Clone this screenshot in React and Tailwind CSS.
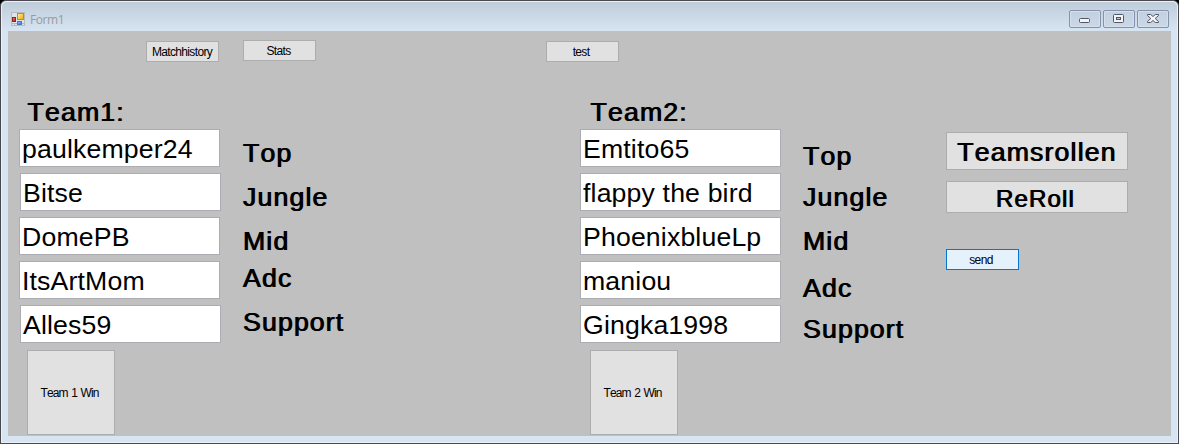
const base = "shrink-0 flex items-center justify-center border border-[#adadad] bg-[#e1e1e1] whitespace-nowrap";
const strong = "text-[26.67px] leading-[30px] tracking-[1.15px] [text-shadow:1px_0_#000] whitespace-nowrap";

function SmallButton({ children, className = "" }) {
  return <button className={`${base} h-[21px] w-[73px] pt-px text-[12px] tracking-[-0.65px] ${className}`}>{children}</button>;
}

function Field({ children, className = "" }) {
  return (
    <div className={`h-[38px] w-[201px] shrink-0 border border-[#abadb3] bg-white pl-[2px] text-[26.67px] leading-[39px] tracking-[0.15px] whitespace-nowrap ${className}`}>
      {children}
    </div>
  );
}

function Role({ children, className = "" }) {
  return <div className={`${strong} h-[30px] ${className}`}>{children}</div>;
}

function Caption({ children, className = "pr-px" }) {
  return <button className={`flex h-[18px] w-8 items-center justify-center rounded-[2px] border border-[#8591ad] bg-gradient-to-b from-[#c3d0df] to-[#cbd8e7] shadow-[inset_0_0_0_1px_#d5e0ec] ${className}`}>{children}</button>;
}

function FormIcon() {
  return (
    <svg width="14" height="14" viewBox="0 0 14 14" shapeRendering="crispEdges">
      <defs>
        <linearGradient id="gold" x1="0" y1="0" x2="1" y2="1"><stop stopColor="#fff3a0" /><stop offset="1" stopColor="#efa900" /></linearGradient>
        <linearGradient id="red" x1="0" y1="0" x2="1" y2="1"><stop stopColor="#ef9080" /><stop offset="1" stopColor="#b50d08" /></linearGradient>
        <linearGradient id="blue" x1="0" y1="0" x2="1" y2="1"><stop stopColor="#a9ccff" /><stop offset="1" stopColor="#2468d8" /></linearGradient>
      </defs>
      <path d="M.5.5h13v13H.5zM1 11.5h12M3.5 11v2" fill="#dce3ea" stroke="#b8babd" />
      <path d="M6.5 1.5h6v6h-6z" fill="url(#gold)" stroke="#c48b16" />
      <path d="M1.5 5.5h3v4h-3z" fill="url(#red)" stroke="#8e2520" />
      <path d="M6.5 9.5h4v3h-4z" fill="url(#blue)" stroke="#4d78b8" />
    </svg>
  );
}

export default function App() {
  return (
    <div className="h-[444px] w-[1179px] overflow-hidden bg-black text-black [font-family:'Liberation_Sans',Arial,sans-serif] [font-kerning:none]">
      <div className="flex h-full flex-col rounded-t-[6px] border border-[#4c494e] bg-[#d7e4f2] shadow-[inset_0_0_0_1px_#eaf1f8]">
        <header className="mx-px mt-px flex h-[29px] shrink-0 items-start rounded-t-[5px] bg-gradient-to-b from-[#bfcddb] to-[#d7e4f2] pl-[9px] pr-[8px]">
          <div className="mt-[10px]"><FormIcon /></div>
          <span className="ml-[5px] mt-[10px] text-[12px] leading-[16px] tracking-[-0.4px] text-[#999b9f] [font-family:'Open_Sans',sans-serif]">Form1</span>
          <div className="ml-auto mt-[8px] flex gap-[2px]">
            <Caption>
              <svg className="mt-[3px]" width="11" height="5" viewBox="0 0 11 5"><rect x=".5" y=".5" width="10" height="4" rx="1" fill="#f4f4f4" stroke="#535666" /></svg>
            </Caption>
            <Caption>
              <svg className="-mt-px" width="11" height="9" viewBox="0 0 11 9"><rect x=".5" y=".5" width="10" height="8" rx="1" fill="#f4f4f4" stroke="#535666" /><rect x="3.5" y="3.5" width="4" height="2" fill="#bccbdc" stroke="#535666" /></svg>
            </Caption>
            <Caption className="">
              <svg className="-mt-px" width="12" height="9" viewBox="0 0 12 9"><path d="M.5.5h3.2L6 2.5 8.3.5h3.2v1L8.2 4.5l3.3 3v1H8.3L6 6.5l-2.3 2H.5v-1l3.3-3L.5 1.5z" fill="#f4f4f4" stroke="#535666" /></svg>
            </Caption>
          </div>
        </header>

        <main className="mx-[7px] flex h-[405px] shrink-0 flex-col bg-[#c0c0c0]">
          <nav className="flex h-[66px] shrink-0 items-start pl-[138px]">
            <SmallButton className="mt-[10px] pr-px">Matchhistory</SmallButton>
            <SmallButton className="mt-[9px] ml-6 pr-[2px]">Stats</SmallButton>
            <SmallButton className="mt-[10px] ml-[230px] pr-[3px]">test</SmallButton>
          </nav>
          <div className="flex items-start">
            <section className="ml-[11px] flex w-[223px] flex-col">
              <h2 className={`${strong} ml-[8px] h-[32px]`}>Team1:</h2>
              <div className="flex flex-col gap-[6px]">
                <Field>paulkemper24</Field>
                <Field className="ml-px">Bitse</Field>
                <Field>DomePB</Field>
                <Field>ItsArtMom</Field>
                <Field className="ml-px">Alles59</Field>
              </div>
              <button className={`${base} ml-[8px] mt-[7px] h-[85px] w-[88px] pr-[3px] pt-px text-[12px] tracking-[-0.95px] [word-spacing:1.3px]`}>Team 1 Win</button>
            </section>
            <section className="mt-[41px] flex w-[338px] flex-col pl-[0.5px]">
              <Role>Top</Role>
              <Role className="mt-[14px]">Jungle</Role>
              <Role className="mt-[14px]">Mid</Role>
              <Role className="mt-[7px]">Adc</Role>
              <Role className="mt-[14px]">Support</Role>
            </section>
            <section className="flex w-[222px] flex-col">
              <h2 className={`${strong} ml-[10px] h-[32px]`}>Team2:</h2>
              <div className="flex flex-col gap-[6px]">
                <Field>Emtito65</Field>
                <Field>flappy the bird</Field>
                <Field>PhoenixblueLp</Field>
                <Field>maniou</Field>
                <Field>Gingka1998</Field>
              </div>
              <button className={`${base} ml-[10px] mt-[7px] h-[85px] w-[88px] pr-[3px] pt-px text-[12px] tracking-[-0.95px] [word-spacing:1.3px]`}>Team 2 Win</button>
            </section>
            <section className="mt-[44px] flex w-[144px] flex-col pl-[0.5px]">
              <Role>Top</Role>
              <Role className="mt-[11px]">Jungle</Role>
              <Role className="mt-[14px]">Mid</Role>
              <Role className="mt-[17px]">Adc</Role>
              <Role className="mt-[11px]">Support</Role>
            </section>
            <section className="mt-[35px] flex flex-col">
              <button className={`${base} ${strong} h-[38px] w-[182px] pr-px pt-[2px]`}>Teamsrollen</button>
              <button className={`${base} mt-[11px] h-[32px] w-[182px] pr-[4px] pt-[3px] text-[24px] leading-[26px] tracking-[1.15px] [text-shadow:1px_0_#000]`}>ReRoll</button>
              <button className="mt-[36px] flex h-[21px] w-[73px] items-center justify-center border border-[#0078d7] bg-[#e5f1fb] pr-[3px] pt-px text-[12px] tracking-[-0.6px]">send</button>
            </section>
          </div>
        </main>
      </div>
    </div>
  );
}
